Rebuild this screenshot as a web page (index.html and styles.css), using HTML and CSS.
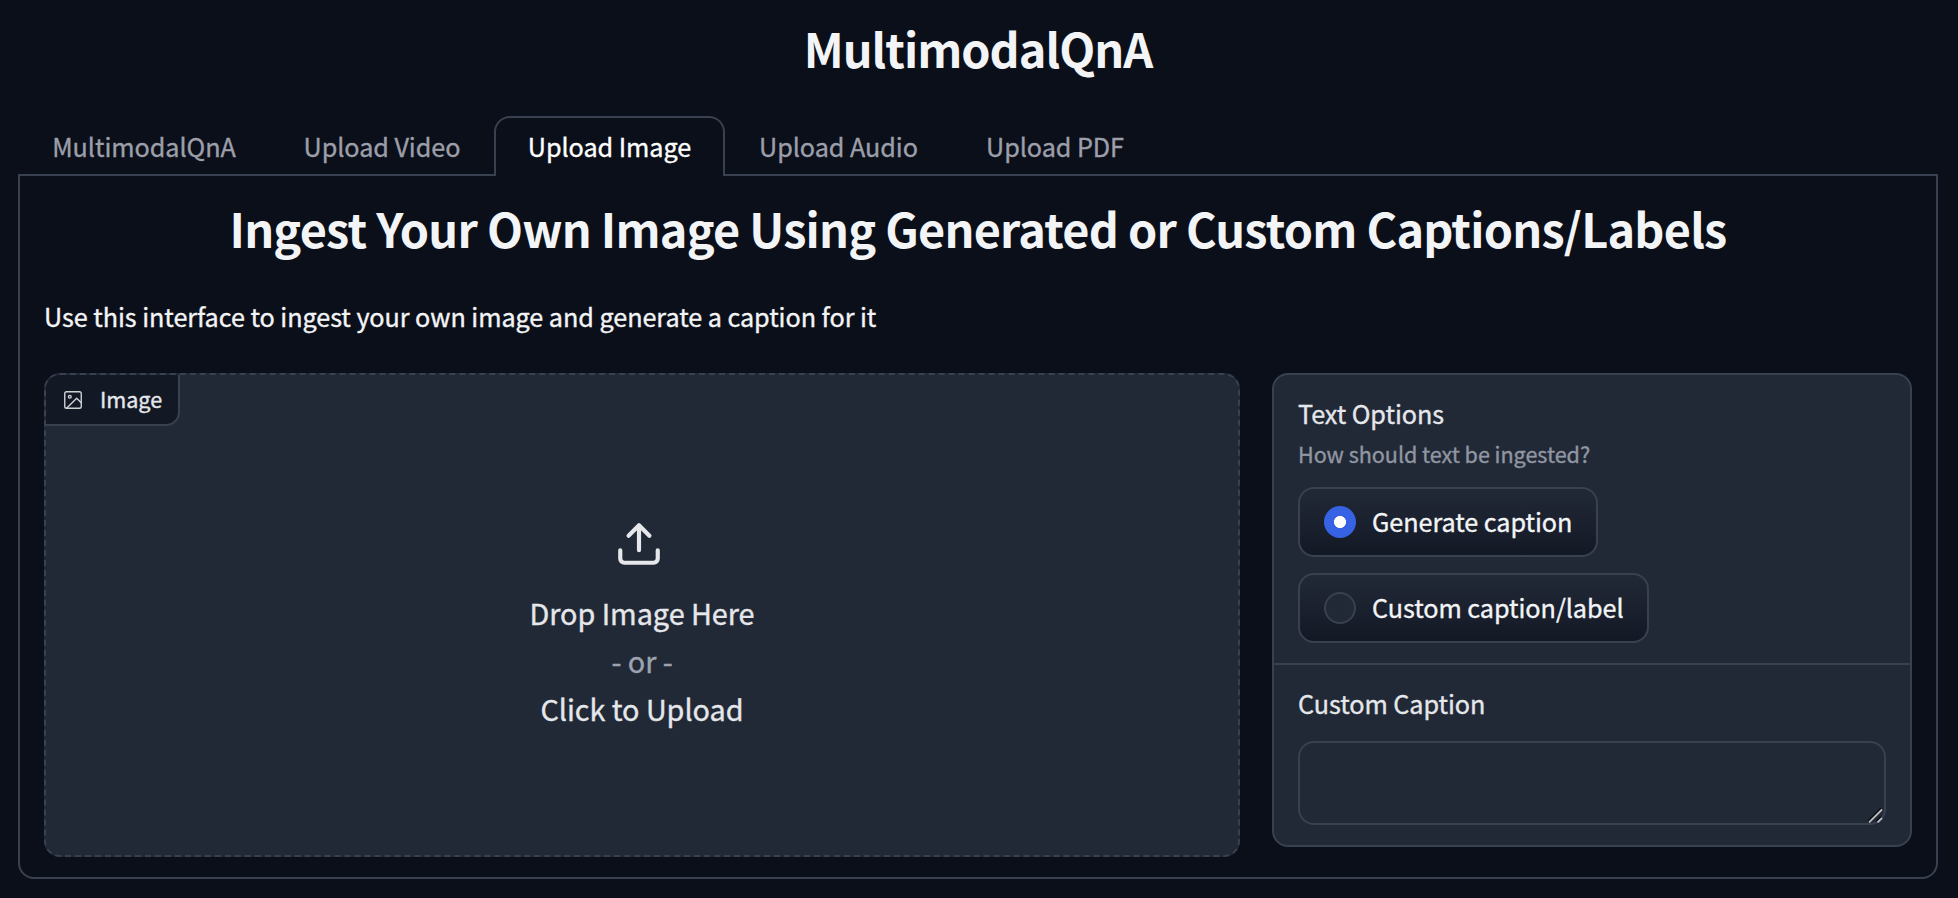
FILE: index.html
```html
<!DOCTYPE html>
<html lang="en">
<head>
<meta charset="utf-8">
<title>MultimodalQnA</title>
<link rel="stylesheet" href="styles.css">
</head>
<body>
<main class="app">
  <h1 class="title"><span>MultimodalQnA</span></h1>
  <nav class="tabs">
    <button class="tab t1"><span>MultimodalQnA</span></button>
    <button class="tab t2"><span>Upload Video</span></button>
    <button class="tab t3 active"><span>Upload Image</span></button>
    <button class="tab t4"><span>Upload Audio</span></button>
    <button class="tab t5"><span>Upload PDF</span></button>
  </nav>
  <section class="panel">
    <h1 class="heading"><span>Ingest Your Own Image Using Generated or Custom Captions/Labels</span></h1>
    <p class="intro"><span>Use this interface to ingest your own image and generate a caption for it</span></p>
    <div class="row">
      <div class="dropzone">
        <div class="badge">
          <svg class="image-icon" viewBox="0 0 24 24"><rect x="3" y="3" width="18" height="18" rx="2"/><circle cx="8.5" cy="8.5" r="1.5"/><path d="M21 15l-5-5L5 21"/></svg>
          <span>Image</span>
        </div>
        <svg class="upload-icon" viewBox="0 0 24 24"><path d="M21 15v4a2 2 0 0 1-2 2H5a2 2 0 0 1-2-2v-4M17 8l-5-5-5 5M12 3v12"/></svg>
        <div class="drop-text"><span>Drop Image Here</span></div>
        <div class="drop-text or"><span>- or -</span></div>
        <div class="drop-text"><span>Click to Upload</span></div>
      </div>
      <div class="form">
        <div class="block options">
          <div class="label"><span>Text Options</span></div>
          <div class="info"><span>How should text be ingested?</span></div>
          <div class="choices">
            <div class="choice c1"><i class="radio checked"></i><span>Generate caption</span></div>
            <div class="choice c2"><i class="radio"></i><span>Custom caption/label</span></div>
          </div>
        </div>
        <div class="block">
          <div class="label"><span>Custom Caption</span></div>
          <div class="textarea">
            <svg class="grip" viewBox="0 0 16 16"><path class="shade" d="M1 14.500L14 1.500M9.500 14.500l4.500-4.500"/><path d="M2 15.500L15 2.500M10.500 15.500L15 11"/></svg>
          </div>
        </div>
      </div>
    </div>
  </section>
</main>
</body>
</html>
```
FILE: styles.css
```css
* { box-sizing: border-box; }
body {
  margin: 0;
  background: #0b0f19;
  color: #f3f4f6;
  font-family: "Noto Sans CJK SC", "Noto Sans", sans-serif;
  font-size: 25.2px;
  line-height: 40px;
  letter-spacing: -0.05px;
  -webkit-text-stroke: 0.35px currentColor;
  white-space: nowrap;
}
.app { height: 898px; padding: 0 20px 0 18px; overflow: hidden; }
h1 {
  margin: 0;
  font-size: 46.8px;
  font-weight: 700;
  line-height: 60px;
  text-align: center;
  letter-spacing: -0.77px;
  -webkit-text-stroke: 0;
}
.title { height: 116px; padding-top: 18px; letter-spacing: -1px; }
.tabs { display: flex; height: 60px; position: relative; z-index: 1; margin-bottom: -2px; }
.tab {
  height: 60px;
  padding: 0 0 2px;
  border: 2px solid transparent;
  border-bottom: 0;
  border-radius: 16px 16px 0 0;
  background: none;
  color: #9c9faa;
  font: inherit;
  letter-spacing: inherit;
  line-height: 56px;
  text-align: center;
}
.t1 { width: 252px; }
.t2 { width: 224px; }
.t3 { width: 231px; }
.t4 { width: 227px; }
.t5 { width: 206px; }
.tab.active { border-color: #394150; background: #0b0f19; color: #fff; }
.panel {
  width: 1920px;
  height: 705px;
  padding: 22px 24px 24px;
  border: 2px solid #394150;
  border-radius: 0 0 16px 16px;
}
.heading { height: 98px; }
.intro { margin: 0; height: 77px; }
.row { display: flex; gap: 32px; align-items: flex-start; }
.dropzone {
  position: relative;
  width: 1196px;
  height: 484px;
  padding-top: 144px;
  border: 2px dashed #394150;
  border-radius: 16px;
  background: #222936;
  text-align: center;
}
.badge {
  position: absolute;
  top: 0;
  left: 0;
  display: flex;
  align-items: center;
  gap: 16px;
  width: 134px;
  height: 51px;
  padding-left: 16px;
  border: solid #394150;
  border-width: 0 2px 2px 0;
  border-radius: 14px 0 14px 0;
  background: #131825;
  color: #e5e7eb;
  font-size: 21.6px;
}
.badge span { padding-bottom: 2px; }
svg { display: block; fill: none; stroke: #e5e7eb; stroke-linecap: round; stroke-linejoin: round; }
.image-icon { width: 22px; height: 22px; stroke: #d0d2d6; stroke-width: 1.5; }
.upload-icon { width: 50px; height: 50px; margin: 0 auto 20px 568px; stroke-width: 2; }
.drop-text { height: 48px; line-height: 48px; font-size: 28.8px; color: #e5e7eb; }
.drop-text.or { color: #9ca3af; }
.form {
  width: 640px;
  height: 474px;
  border: 2px solid #394150;
  border-radius: 16px;
  background: #222936;
}
.block { padding: 18px 24px; }
.options { height: 290px; border-bottom: 2px solid #394150; }
.label { height: 41px; color: #e5e7eb; }
.info { height: 53px; font-size: 21.6px; color: #9196a3; }
.choices { display: flex; flex-direction: column; gap: 16px; }
.choice {
  display: flex;
  align-items: center;
  gap: 16px;
  height: 70px;
  padding-left: 24px;
  border: 2px solid #394150;
  border-radius: 16px;
  background: linear-gradient(#222936, #131825);
}
.choice span { padding-bottom: 2px; }
.c1 { width: 300px; }
.c2 { width: 351px; }
.radio { width: 32px; height: 32px; border: 2px solid #394150; border-radius: 50%; background: #222936; }
.radio.checked { border-color: #3662e3; background: radial-gradient(circle, #fff 5.700px, #3662e3 6.300px); }
.textarea {
  display: flex;
  justify-content: flex-end;
  align-items: flex-end;
  height: 84px;
  margin-top: 17px;
  padding-right: 1px;
  border: 2px solid #394150;
  border-radius: 16px;
  background: #222936;
}
.grip { width: 16px; height: 16px; stroke: #b8babd; stroke-width: 1.8; stroke-linecap: butt; }
.grip .shade { stroke: #080b10; }
```
